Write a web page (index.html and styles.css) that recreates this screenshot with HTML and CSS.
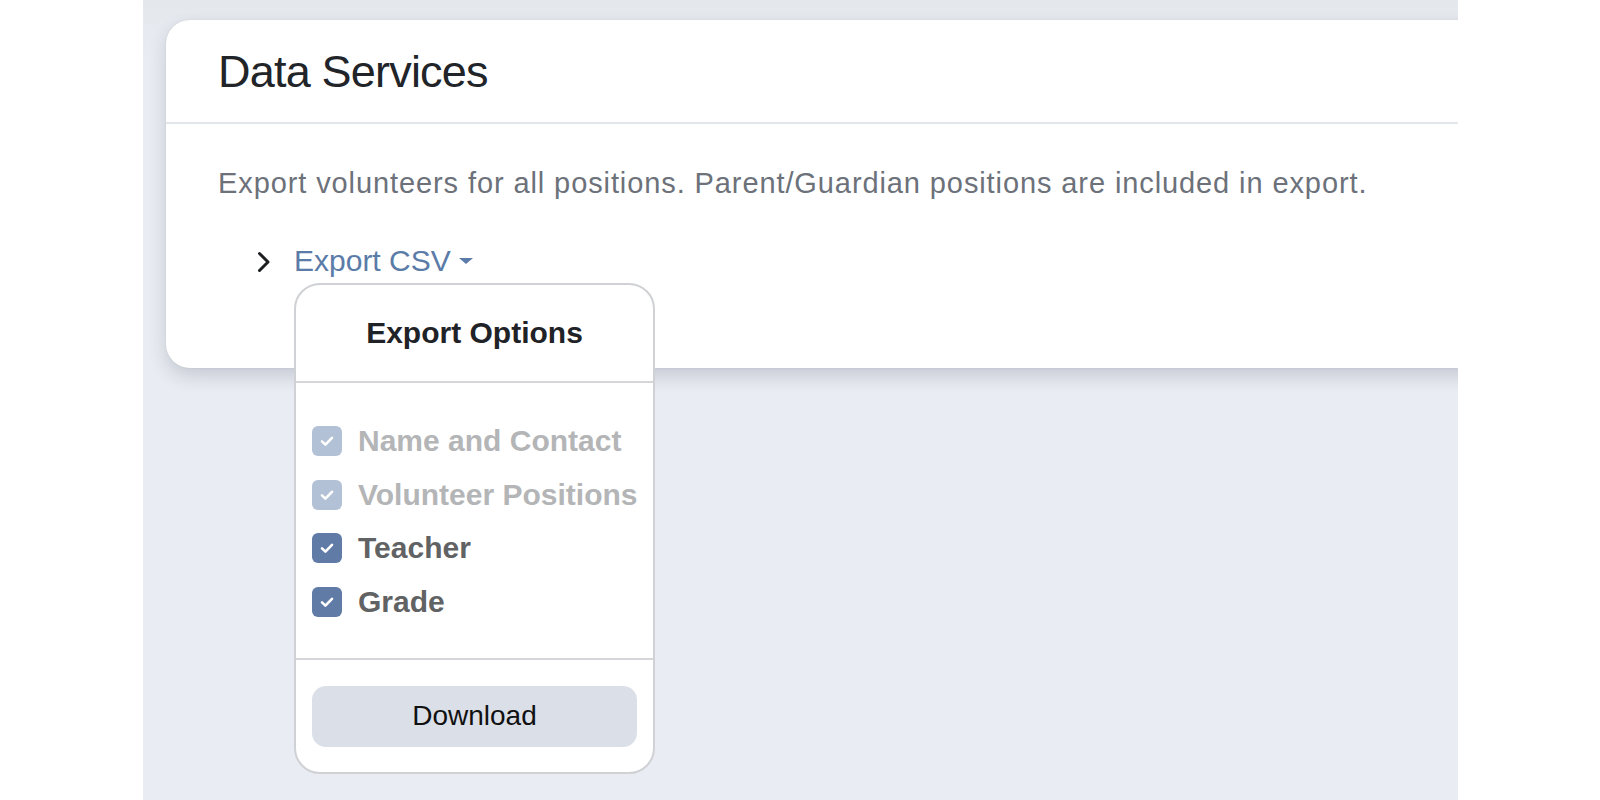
FILE: index.html
```html
<!DOCTYPE html>
<html>
<head>
<meta charset="utf-8">
<link rel="stylesheet" href="styles.css">
</head>
<body>
<div class="stage">
  <div class="card">
    <div class="card-header">
      <h1 class="title">Data Services</h1>
    </div>
    <div class="card-body">
      <p class="desc">Export volunteers for all positions. Parent/Guardian positions are included in export.</p>
      <div class="export-row">
        <svg class="chev" width="14" height="22" viewBox="0 0 14 22"><path d="M2.5 2.5 L11 11 L2.5 19.5" fill="none" stroke="#1d1f22" stroke-width="3" stroke-linecap="round" stroke-linejoin="round"/></svg>
        <div class="export-wrap">
          <span class="export-link">Export CSV <span class="caret"></span></span>
          <div class="popover">
            <div class="pop-head">Export Options</div>
            <div class="pop-list">
              <label class="opt disabled"><span class="box"><svg width="20" height="20" viewBox="0 0 20 20"><path d="M5 10.4 L8.4 13.6 L15 6.8" fill="none" stroke="#fff" stroke-width="2.6" stroke-linecap="round" stroke-linejoin="round"/></svg></span>Name and Contact</label>
              <label class="opt disabled"><span class="box"><svg width="20" height="20" viewBox="0 0 20 20"><path d="M5 10.4 L8.4 13.6 L15 6.8" fill="none" stroke="#fff" stroke-width="2.6" stroke-linecap="round" stroke-linejoin="round"/></svg></span>Volunteer Positions</label>
              <label class="opt"><span class="box"><svg width="20" height="20" viewBox="0 0 20 20"><path d="M5 10.4 L8.4 13.6 L15 6.8" fill="none" stroke="#fff" stroke-width="2.6" stroke-linecap="round" stroke-linejoin="round"/></svg></span>Teacher</label>
              <label class="opt"><span class="box"><svg width="20" height="20" viewBox="0 0 20 20"><path d="M5 10.4 L8.4 13.6 L15 6.8" fill="none" stroke="#fff" stroke-width="2.6" stroke-linecap="round" stroke-linejoin="round"/></svg></span>Grade</label>
            </div>
            <div class="pop-foot">
              <button class="dl">Download</button>
            </div>
          </div>
        </div>
      </div>
    </div>
  </div>
</div>
</body>
</html>
```
FILE: styles.css
```css
html, body {
  margin: 0;
  padding: 0;
  background: #ffffff;
  font-family: "Liberation Sans", Arial, sans-serif;
}
.stage {
  margin-left: 143px;
  width: 1315px;
  height: 800px;
  background: #e9ecf2;
  background-image: linear-gradient(#e4e7ec 0, #e9ecf2 60px, #e9ecf2 100%);
  overflow: hidden;
  padding: 20px 0 0 23px;
  box-sizing: border-box;
}
.card {
  width: 1340px;
  height: 348px;
  background: #fff;
  border-radius: 24px;
  box-shadow: 0 8px 18px rgba(40, 50, 70, 0.18), 0 0 2px rgba(40, 50, 70, 0.1);
}
.card-header {
  height: 102px;
  border-bottom: 2px solid #e3e6ea;
  padding-left: 52px;
  display: flex;
  align-items: center;
}
.title {
  margin: 0;
  padding-top: 2px;
  font-size: 45px;
  font-weight: 400;
  color: #212428;
  letter-spacing: -0.8px;
}
.card-body {
  padding: 42px 0 0 52px;
}
.desc {
  margin: 0;
  font-size: 29px;
  line-height: 34px;
  letter-spacing: 0.9px;
  color: #6c717a;
}
.export-row {
  display: flex;
  align-items: center;
  margin-top: 43px;
  margin-left: 39px;
  gap: 23px;
}
.chev { display: block; margin-top: 1px; }
.export-wrap {
  position: relative;
}
.export-link {
  font-size: 30px;
  line-height: 36px;
  color: #5b7ba8;
  display: flex;
  align-items: center;
  white-space: pre;
}
.caret {
  display: inline-block;
  width: 0;
  height: 0;
  border-left: 7px solid transparent;
  border-right: 7px solid transparent;
  border-top: 6px solid #5b7ba8;
}
.popover {
  position: absolute;
  left: 0;
  top: 40px;
  width: 361px;
  background: #fff;
  border: 2px solid #cfd1d4;
  border-radius: 26px;
  box-sizing: border-box;
}
.pop-head {
  height: 96px;
  border-bottom: 2px solid #d4d6d9;
  display: flex;
  align-items: center;
  justify-content: center;
  font-weight: 700;
  font-size: 30px;
  color: #1f2226;
}
.pop-list {
  padding: 39px 0 37px 16px;
  border-bottom: 2px solid #d4d6d9;
  display: flex;
  flex-direction: column;
  gap: 15.6px;
}
.opt {
  display: flex;
  align-items: center;
  gap: 16px;
  font-size: 30px;
  font-weight: 700;
  color: #616263;
  height: 38px;
}
.opt.disabled { color: #b4b5b7; }
.box {
  width: 30px;
  height: 30px;
  border-radius: 6px;
  background: #5f7ba6;
  display: flex;
  align-items: center;
  justify-content: center;
}
.opt.disabled .box { background: #b2c1d5; }
.pop-foot {
  padding: 26px 16px 25px 16px;
}
.dl {
  display: block;
  width: 100%;
  height: 61px;
  border: none;
  border-radius: 14px;
  background: #dbdfe8;
  font-family: "Liberation Sans", Arial, sans-serif;
  font-size: 28px;
  color: #111;
}
```
